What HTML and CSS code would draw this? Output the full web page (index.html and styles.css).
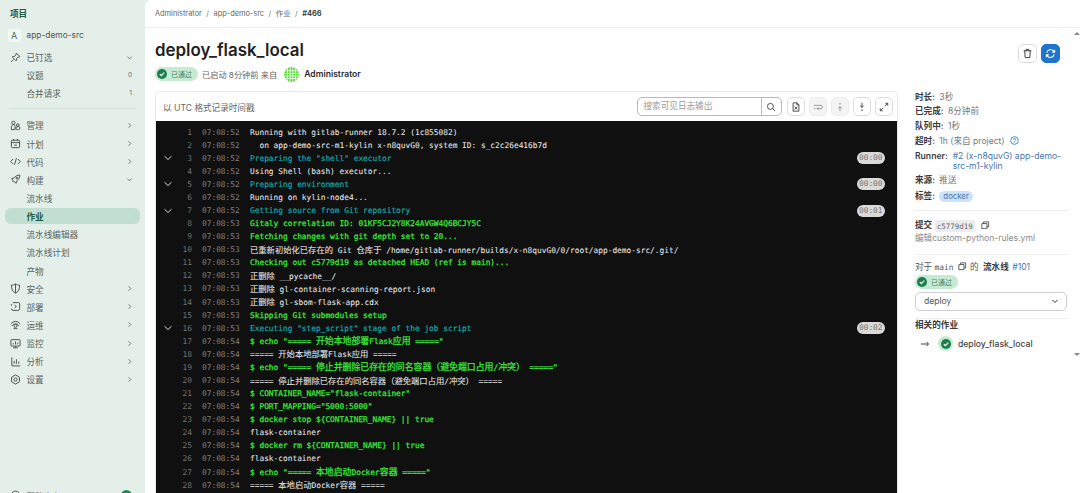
FILE: index.html
```
<!DOCTYPE html>
<html lang="zh">
<head>
<meta charset="utf-8">
<title>deploy_flask_local</title>
<link rel="stylesheet" href="styles.css">
</head>
<body>
<div class="page">
<nav class="side">
  <div class="side-title">项目</div>
  <div class="proj"><span class="proj-a">A</span><span>app-demo-src</span></div>
  <div class="item"><svg class="ico" viewBox="0 0 12 12"><path d="M7 1.2l3.8 3.8-1 .6-.9-.3-1.8 2 .2 1.6-.8.7-4.1-4.1.7-.8 1.6.2 2-1.8-.3-.9zM3.8 8.2L1.2 10.8"/></svg><span class="lbl">已钉选</span><svg class="chev" viewBox="0 0 8 8"><path d="M1.5 3l2.5 2.5L6.500 3"/></svg></div>
  <div class="item"><span class="lbl sub">议题</span><span class="cnt">0</span></div>
  <div class="item"><span class="lbl sub">合并请求</span><span class="cnt">1</span></div>
  <hr class="side-div">
  <div class="item"><svg class="ico" viewBox="0 0 12 12"><circle cx="3.700" cy="3" r="1.800"/><path d="M1.500 10.500V7.200c0-1.200 1-2 2.200-2s1.800.6 1.800 1.800v3.500z"/><circle cx="8.500" cy="5.500" r="1.400"/><rect x="6.500" y="7.200" width="4.300" height="3.300" rx="1.500"/></svg><span class="lbl">管理</span><svg class="chev" viewBox="0 0 8 8"><path d="M3 1.500L5.500 4 3 6.500"/></svg></div>
  <div class="item"><svg class="ico" viewBox="0 0 12 12"><rect x="1.500" y="2.500" width="9" height="8" rx="1"/><path d="M1.500 5h9M3.800 1v2M8.200 1v2M4.500 7.800h3"/></svg><span class="lbl">计划</span><svg class="chev" viewBox="0 0 8 8"><path d="M3 1.500L5.500 4 3 6.500"/></svg></div>
  <div class="item"><svg class="ico" viewBox="0 0 12 12"><path d="M3.500 3.200L.8 6l2.700 2.800M8.500 3.200L11.200 6 8.500 8.800M7 2.500L5 9.500"/></svg><span class="lbl">代码</span><svg class="chev" viewBox="0 0 8 8"><path d="M3 1.500L5.500 4 3 6.500"/></svg></div>
  <div class="item"><svg class="ico" viewBox="0 0 12 12"><path d="M10.800 1.200c-2.700 0-4.800 1-6.300 3l-2.900 1 1.800 1.600-.4 1 1 1 1-.4 1.600 1.800 1-2.900c2-1.500 3.200-3.400 3.200-6.100z"/><circle cx="7.600" cy="4.400" r="1"/></svg><span class="lbl">构建</span><svg class="chev" viewBox="0 0 8 8"><path d="M1.500 3l2.500 2.500L6.500 3"/></svg></div>
  <div class="item"><span class="lbl sub">流水线</span></div>
  <div class="item active"><span class="lbl sub">作业</span></div>
  <div class="item"><span class="lbl sub">流水线编辑器</span></div>
  <div class="item"><span class="lbl sub">流水线计划</span></div>
  <div class="item"><span class="lbl sub">产物</span></div>
  <div class="item"><svg class="ico" viewBox="0 0 12 12"><path d="M6 1c1.500 1 3 1.300 4.500 1.300 0 4-1.200 7.300-4.500 8.700-3.300-1.400-4.500-4.700-4.500-8.700C3 2.300 4.500 2 6 1zM6 1v10"/></svg><span class="lbl">安全</span><svg class="chev" viewBox="0 0 8 8"><path d="M3 1.500L5.500 4 3 6.500"/></svg></div>
  <div class="item"><svg class="ico" viewBox="0 0 12 12"><path d="M3 1.800h6.500a1 1 0 0 1 1 1v5.500a2 2 0 0 1-2 2H3.500a2 2 0 0 1-2-2M1.500 5V3.300"/><path d="M5 4.500L7 6 5 7.500"/></svg><span class="lbl">部署</span><svg class="chev" viewBox="0 0 8 8"><path d="M3 1.500L5.500 4 3 6.500"/></svg></div>
  <div class="item"><svg class="ico" viewBox="0 0 12 12"><path d="M2.200 7.500a4.300 4.300 0 0 1 7.600 0M1 5.300a6 6 0 0 1 10 0"/><circle cx="6" cy="7.500" r="1.700"/><path d="M4 10.500h4"/></svg><span class="lbl">运维</span><svg class="chev" viewBox="0 0 8 8"><path d="M3 1.500L5.500 4 3 6.500"/></svg></div>
  <div class="item"><svg class="ico" viewBox="0 0 12 12"><rect x="1" y="1.800" width="10" height="7" rx=".8"/><path d="M6 9v1.500M3.500 10.700h5M3.500 7V5.500M6 7V3.800M8.500 7V5"/></svg><span class="lbl">监控</span><svg class="chev" viewBox="0 0 8 8"><path d="M3 1.500L5.500 4 3 6.500"/></svg></div>
  <div class="item"><svg class="ico" viewBox="0 0 12 12"><path d="M2 1.500v9.300h9M4.500 8.500V5.500M7 8.500V3.500M9.500 8.500V6"/></svg><span class="lbl">分析</span><svg class="chev" viewBox="0 0 8 8"><path d="M3 1.500L5.500 4 3 6.500"/></svg></div>
  <div class="item"><svg class="ico" viewBox="0 0 12 12"><path d="M6 1l4.300 2.500v5L6 11 1.700 8.500v-5z"/><circle cx="6" cy="6" r="1.800"/></svg><span class="lbl">设置</span><svg class="chev" viewBox="0 0 8 8"><path d="M3 1.500L5.500 4 3 6.500"/></svg></div>
  <div class="item help"><svg class="ico" viewBox="0 0 12 12"><circle cx="6" cy="6" r="4.800"/></svg><span class="lbl">帮助中心</span><span class="help-dot"></span></div>
</nav>

<main class="main">
  <header class="crumbs">
    <span>Administrator</span><i>/</i><span>app-demo-src</span><i>/</i><span>作业</span><i>/</i><b>#466</b>
  </header>
  <div class="content">
    <section class="left">
      <h1 class="title">deploy_flask_local</h1>
      <div class="meta">
        <span class="badge"><svg class="ok" viewBox="0 0 10 10"><circle cx="5" cy="5" r="5"/><path d="M2.800 5.100l1.600 1.600 2.900-3"/></svg>已通过</span>
        <span class="meta-t">已启动 8分钟前 来自</span>
        <svg class="avatar" viewBox="0 0 15 15"><circle cx="7.500" cy="7.500" r="7.500"/><path d="M0 3.750h15M0 6.500h15M0 9h15M0 11.500h15M3.500 0v15M6.200 0v15M8.800 0v15M11.500 0v15"/></svg>
        <b class="meta-n">Administrator</b>
      </div>
      <div class="panel">
        <div class="toolbar">
          <span class="tool-l">以 UTC 格式记录时间戳</span>
          <div class="search"><span class="search-in">搜索可见日志输出</span><span class="search-btn"><svg viewBox="0 0 12 12"><circle cx="5.300" cy="5.300" r="3.600"/><path d="M8 8l2.800 2.800"/></svg></span></div>
          <span class="tbtn"><svg viewBox="0 0 12 12"><path d="M2.500 1h4.700l2.300 2.400V11h-7zM7 1v2.500h2.500M4.200 9l3.500-3.500M4.200 5.500L7.700 9"/></svg></span>
          <span class="tbtn off"><svg viewBox="0 0 12 12"><path d="M1 4h9c1.500 0 1.500 4 0 4H5M1 8h2M6.500 6.300L4.800 8l1.700 1.700"/></svg></span>
          <span class="tbtn off"><svg viewBox="0 0 12 12"><circle class="dot" cx="6" cy="2" r=".9"/><path d="M6 11V5.500M3.800 7.700L6 5.500l2.200 2.200"/></svg></span>
          <span class="tbtn"><svg viewBox="0 0 12 12"><path d="M6 1v5.500M3.800 4.300L6 6.500l2.200-2.200"/><circle class="dot" cx="6" cy="10" r=".9"/></svg></span>
          <span class="tbtn"><svg viewBox="0 0 12 12"><path d="M7 5l3.300-3.300M7.500 1.500h3v3M5 7l-3.300 3.300M4.500 10.500h-3v-3"/></svg></span>
        </div>
        <div class="log">
          <div class="row"><span class="fold"></span><span class="n">1</span><span class="t">07:08:52</span><span class="m">Running with gitlab-runner 18.7.2 (1c855082)</span></div>
          <div class="row"><span class="fold"></span><span class="n">2</span><span class="t">07:08:52</span><span class="m">  on app-demo-src-m1-kylin x-n8quvG0, system ID: s_c2c26e416b7d</span></div>
          <div class="row"><span class="fold"><svg viewBox="0 0 8 8"><path d="M.5 2.200L4 5.500l3.500-3.300"/></svg></span><span class="n">3</span><span class="t">07:08:52</span><span class="m cy">Preparing the "shell" executor</span><span class="pill">00:00</span></div>
          <div class="row"><span class="fold"></span><span class="n">4</span><span class="t">07:08:52</span><span class="m">Using Shell (bash) executor...</span></div>
          <div class="row"><span class="fold"><svg viewBox="0 0 8 8"><path d="M.5 2.200L4 5.500l3.500-3.300"/></svg></span><span class="n">5</span><span class="t">07:08:52</span><span class="m cy">Preparing environment</span><span class="pill">00:00</span></div>
          <div class="row"><span class="fold"></span><span class="n">6</span><span class="t">07:08:52</span><span class="m">Running on kylin-node4...</span></div>
          <div class="row"><span class="fold"><svg viewBox="0 0 8 8"><path d="M.5 2.200L4 5.500l3.500-3.300"/></svg></span><span class="n">7</span><span class="t">07:08:52</span><span class="m cy">Getting source from Git repository</span><span class="pill">00:01</span></div>
          <div class="row"><span class="fold"></span><span class="n">8</span><span class="t">07:08:53</span><span class="m gr">Gitaly correlation ID: 01KF5CJ2Y8K24AVGW4Q6BCJY5C</span></div>
          <div class="row"><span class="fold"></span><span class="n">9</span><span class="t">07:08:53</span><span class="m gr">Fetching changes with git depth set to 20...</span></div>
          <div class="row"><span class="fold"></span><span class="n">10</span><span class="t">07:08:53</span><span class="m"><span class="c">已重新初始化已存在的</span> Git <span class="c">仓库于</span> /home/gitlab-runner/builds/x-n8quvG0/0/root/app-demo-src/.git/</span></div>
          <div class="row"><span class="fold"></span><span class="n">11</span><span class="t">07:08:53</span><span class="m gr">Checking out c5779d19 as detached HEAD (ref is main)...</span></div>
          <div class="row"><span class="fold"></span><span class="n">12</span><span class="t">07:08:53</span><span class="m"><span class="c">正删除</span> __pycache__/</span></div>
          <div class="row"><span class="fold"></span><span class="n">13</span><span class="t">07:08:53</span><span class="m"><span class="c">正删除</span> gl-container-scanning-report.json</span></div>
          <div class="row"><span class="fold"></span><span class="n">14</span><span class="t">07:08:53</span><span class="m"><span class="c">正删除</span> gl-sbom-flask-app.cdx</span></div>
          <div class="row"><span class="fold"></span><span class="n">15</span><span class="t">07:08:53</span><span class="m gr">Skipping Git submodules setup</span></div>
          <div class="row"><span class="fold"><svg viewBox="0 0 8 8"><path d="M.5 2.200L4 5.500l3.500-3.300"/></svg></span><span class="n">16</span><span class="t">07:08:53</span><span class="m cy">Executing "step_script" stage of the job script</span><span class="pill">00:02</span></div>
          <div class="row"><span class="fold"></span><span class="n">17</span><span class="t">07:08:54</span><span class="m gr">$ echo "===== <span class="c">开始本地部署</span>Flask<span class="c">应用</span> ====="</span></div>
          <div class="row"><span class="fold"></span><span class="n">18</span><span class="t">07:08:54</span><span class="m">===== <span class="c">开始本地部署</span>Flask<span class="c">应用</span> =====</span></div>
          <div class="row"><span class="fold"></span><span class="n">19</span><span class="t">07:08:54</span><span class="m gr">$ echo "===== <span class="c">停止并删除已存在的同名容器（避免端口占用</span>/<span class="c">冲突）</span> ====="</span></div>
          <div class="row"><span class="fold"></span><span class="n">20</span><span class="t">07:08:54</span><span class="m">===== <span class="c">停止并删除已存在的同名容器（避免端口占用</span>/<span class="c">冲突）</span> =====</span></div>
          <div class="row"><span class="fold"></span><span class="n">21</span><span class="t">07:08:54</span><span class="m gr">$ CONTAINER_NAME="flask-container"</span></div>
          <div class="row"><span class="fold"></span><span class="n">22</span><span class="t">07:08:54</span><span class="m gr">$ PORT_MAPPING="5000:5000"</span></div>
          <div class="row"><span class="fold"></span><span class="n">23</span><span class="t">07:08:54</span><span class="m gr">$ docker stop ${CONTAINER_NAME} || true</span></div>
          <div class="row"><span class="fold"></span><span class="n">24</span><span class="t">07:08:54</span><span class="m">flask-container</span></div>
          <div class="row"><span class="fold"></span><span class="n">25</span><span class="t">07:08:54</span><span class="m gr">$ docker rm ${CONTAINER_NAME} || true</span></div>
          <div class="row"><span class="fold"></span><span class="n">26</span><span class="t">07:08:54</span><span class="m">flask-container</span></div>
          <div class="row"><span class="fold"></span><span class="n">27</span><span class="t">07:08:54</span><span class="m gr">$ echo "===== <span class="c">本地启动</span>Docker<span class="c">容器</span> ====="</span></div>
          <div class="row"><span class="fold"></span><span class="n">28</span><span class="t">07:08:54</span><span class="m">===== <span class="c">本地启动</span>Docker<span class="c">容器</span> =====</span></div>
        </div>
      </div>
    </section>

    <aside class="aside">
      <div class="actions">
        <span class="abtn"><svg viewBox="0 0 12 12"><path d="M1.800 3h8.400M4.500 3V1.500h3V3M3 3l.4 7.500h5.200L9 3"/></svg></span>
        <span class="abtn blue"><svg viewBox="0 0 12 12"><path d="M2 5a4.200 4.200 0 0 1 7.300-1.800L10.500 4.500M10.500 1.800v2.700H7.800M10 7a4.200 4.200 0 0 1-7.300 1.800L1.500 7.500M1.500 10.200V7.500h2.700"/></svg></span>
      </div>
      <div class="kv"><b>时长:</b> 3秒</div>
      <div class="kv"><b>已完成:</b> 8分钟前</div>
      <div class="kv"><b>队列中:</b> 1秒</div>
      <div class="kv"><b>超时:</b> 1h (来自 project) <svg class="q" viewBox="0 0 10 10"><circle cx="5" cy="5" r="4.300"/><path d="M3.700 4a1.300 1.300 0 1 1 1.900 1.100c-.4.300-.6.500-.6 1M5 7.200v.6"/></svg></div>
      <div class="kv runner"><b>Runner:</b><a>#2 (x-n8quvG) app-demo-src-m1-kylin</a></div>
      <div class="kv"><b>来源:</b> 推送</div>
      <div class="kv tags"><b>标签:</b> <span class="tag">docker</span></div>
      <hr class="a-div">
      <div class="kv commit"><b class="plain">提交</b> <code class="sha">c5779d19</code> <svg class="copy" viewBox="0 0 10 10"><path d="M3 3V1h6v6H7M1 3h6v6H1z"/></svg></div>
      <div class="kv msg">编辑custom-python-rules.yml</div>
      <hr class="a-div pipe-div">
      <div class="kv pipe">对于 <code class="mono">main</code> <svg class="copy" viewBox="0 0 10 10"><path d="M3 3V1h6v6H7M1 3h6v6H1z"/></svg> <span class="de">的</span> <b>流水线</b> <a>#101</a></div>
      <span class="badge small"><svg class="ok" viewBox="0 0 10 10"><circle cx="5" cy="5" r="5"/><path d="M2.800 5.100l1.600 1.600 2.900-3"/></svg>已通过</span>
      <div class="select"><span>deploy</span><svg viewBox="0 0 8 8"><path d="M1.500 3l2.500 2.500L6.500 3"/></svg></div>
      <hr class="a-div">
      <div class="kv rel"><b>相关的作业</b></div>
      <div class="job"><svg class="arrow" viewBox="0 0 10 10"><path d="M1 5h7.500M6.500 3l2 2-2 2"/></svg><span class="ring"><svg class="ok" viewBox="0 0 10 10"><circle cx="5" cy="5" r="5"/><path d="M2.800 5.100l1.600 1.600 2.900-3"/></svg></span><span>deploy_flask_local</span></div>
    </aside>
  </div>
  <span class="mark m1"></span>
  <span class="mark m2"></span>
</main>
</div>
</body>
</html>
```
FILE: styles.css
```
* { box-sizing: border-box; }
html, body { margin: 0; height: 493px; overflow: hidden; background: #e4efe9; }
body, .page { font-family: Inter, "Noto Sans CJK SC", sans-serif; font-size: 8.6px; color: #444; }
.page { display: flex; width: 1080px; height: 493px; overflow: hidden; }

.side { width: 145px; flex: none; height: 493px; overflow: hidden; display: flex; flex-direction: column; padding: 6px 5px 0; background: #e4efe9; color: #5b6560; }
.side-title { font-weight: 700; font-size: 8.6px; color: #1f5a45; padding: 1px 5px 0; height: 20px; }
.proj { display: flex; align-items: center; gap: 6px; height: 18px; margin: 0 0 4px 2.500px; font-size: 8.400px; color: #555; }
.proj-a { width: 13px; height: 13px; background: #f1f7f4; color: #44685a; text-align: center; line-height: 13px; font-size: 9px; border-radius: 2px; }
.item { display: flex; align-items: center; height: 18.150px; flex: none; padding: 0 7px 0 4.500px; border-radius: 6px; }
.ico { width: 11px; height: 11px; flex: none; fill: none; stroke: #444c48; stroke-width: 1; margin-right: 6px; }
.lbl { flex: 1; white-space: nowrap; }
.lbl.sub { padding-left: 17px; }
.chev { width: 7px; height: 7px; flex: none; fill: none; stroke: #666; stroke-width: 1; }
.cnt { font-size: 6.500px; color: #666; padding-right: 1px; }
.side-div { width: 126px; margin: 6px 0 7px 5px; border: 0; border-top: 1px solid #d5e2db; }
.active { background: #c1dfd0; color: #1f5a45; font-weight: 600; height: 16.500px; margin: .8px 0; }
.help { margin-top: auto; margin-bottom: -12px; }
.help-dot { width: 11px; height: 11px; border-radius: 50%; background: #1f8a55; margin-right: 1px; }

.main { flex: 1; position: relative; min-width: 0; height: 493px; background: #fff; border-radius: 6px 0 0 0; display: flex; flex-direction: column; overflow: hidden; }
.crumbs { height: 28px; flex: none; border-bottom: 1px solid #eee; display: flex; align-items: center; gap: 4px; padding-left: 10px; font-size: 7.400px; line-height: 10px; color: #666; }
.crumbs > * { height: 10px; }
.crumbs i { font-style: normal; color: #777; margin: 0 .5px; }
.crumbs b { color: #444; font-weight: 700; }
.content { flex: 1; display: flex; min-height: 0; }

.left { width: 753px; flex: none; padding-left: 10px; display: flex; flex-direction: column; min-height: 0; }
.title { margin: 11px 0 0; height: 25px; font-size: 16.900px; line-height: 23px; font-weight: 600; color: #1f1f22; }
.meta { display: flex; align-items: center; height: 16px; margin: 2px 0 0; }
.badge { display: inline-flex; align-items: center; gap: 4px; width: 43px; height: 14px; padding: 0 0 0 2px; border-radius: 7px; background: #c6e9d2; color: #4c8a68; font-size: 7px; }
.ok { width: 10px; height: 10px; flex: none; fill: #1b7f4d; stroke: none; }
.ok path { fill: none; stroke: #fff; stroke-width: 1.200; }
.meta-t { margin-left: 4px; color: #666; font-size: 8.200px; }
.avatar { width: 15px; height: 15px; margin: 0 5px 0 7px; fill: #63db42; }
.avatar path { stroke: #fff; stroke-width: .7; }
.meta-n { font-weight: 600; color: #2c2c30; }

.panel { margin-top: 9px; flex: 1; min-height: 0; border: 1px solid #e8e8e8; border-bottom: 0; border-radius: 5px 5px 0 0; display: flex; flex-direction: column; overflow: hidden; }
.toolbar { height: 29px; flex: none; display: flex; align-items: center; gap: 4px; padding: 0 4px 0 7px; color: #666; }
.tool-l { flex: 1; }
.search { width: 145px; height: 19.500px; border: 1px solid #b8b8bc; border-radius: 5px; display: flex; margin-right: 1.500px; }
.search-in { flex: 1; padding-left: 6px; line-height: 17.500px; color: #9a9a9e; border-right: 1px solid #bbb; }
.search-btn { width: 19px; display: flex; align-items: center; justify-content: center; }
.search svg, .tbtn svg { width: 10px; height: 10px; fill: none; stroke: #333; stroke-width: 1; }
.tbtn .dot { fill: #333; stroke: none; }
.tbtn { width: 18px; height: 19px; border: 1px solid #dcdcde; border-radius: 5px; display: flex; align-items: center; justify-content: center; }
.tbtn.off { background: #f4f4f5; border-color: #ececee; }
.tbtn.off svg { stroke: #888; }
.tbtn.off .dot { fill: #888; }

.log { flex: 1; background: #101010; padding-top: 4.500px; overflow: hidden; font-family: "DejaVu Sans Mono", "Noto Sans CJK SC", monospace; font-size: 7.840px; color: #e6e6e6; }
.row { display: flex; align-items: center; height: 13.080px; white-space: pre; padding-right: 12px; }
.fold { width: 18px; flex: none; padding-left: 8px; display: flex; }
.fold svg { width: 8px; height: 8px; fill: none; stroke: #d8d8d8; stroke-width: 1; }
.n { width: 18px; flex: none; text-align: right; color: #737373; }
.t { width: 48px; flex: none; margin-left: 10px; color: #808080; }
.m { flex: 1; min-width: 0; -webkit-text-stroke: .06px; }
.c { font-family: "Noto Sans CJK SC", sans-serif; font-size: 8.300px; line-height: 1; }
.gr .c { font-size: 8.900px; }
.cy { color: #12a4a6; -webkit-text-stroke: .2px; }
.gr { color: #3ae83c; -webkit-text-stroke: .25px; }
.pill { flex: none; width: 28.500px; height: 12px; border-radius: 6px; background: #d9d9d9; color: #777; text-align: center; line-height: 12px; font-size: 7.800px; }

.aside { width: 153px; flex: none; margin-left: 17px; display: flex; flex-direction: column; align-items: stretch; }
.actions { display: flex; justify-content: flex-end; gap: 4px; height: 19px; margin-top: 15.500px; margin-bottom: 27px; padding-right: 8px; }
.abtn { width: 19px; height: 19px; border: 1px solid #dcdcde; border-radius: 5px; display: flex; align-items: center; justify-content: center; }
.abtn svg { width: 11px; height: 11px; fill: none; stroke: #333; stroke-width: 1; }
.abtn.blue { background: #1f75cb; border-color: #1f75cb; }
.abtn.blue svg { stroke: #fff; stroke-width: 1.200; }
.kv { min-height: 14.700px; line-height: 14.700px; color: #777; white-space: nowrap; }
.kv b { color: #3a3a3e; font-weight: 600; margin-right: 2px; }
.kv b.plain { margin-right: 0; }
.kv a, .pipe a { color: #4a75ac; }
.q { width: 9px; height: 9px; fill: none; stroke: #1f75cb; stroke-width: .9; vertical-align: -1.500px; margin-left: 3px; }
.runner { display: flex; gap: 3px; white-space: normal; line-height: 10px; padding: 2.500px 0 2px; }
.runner b { flex: none; line-height: 10px; }
.tags { margin-top: 1px; }
.tag { display: inline-block; height: 11px; line-height: 11px; padding: 0 4px; border-radius: 6px; background: #cbe2f9; color: #4a75ac; font-size: 7.800px; }
.a-div { width: 100%; margin: 7px 0 7px; border: 0; border-top: 1px solid #eee; }
.pipe-div { margin: 8px 0 5px; }
.commit { height: 14px; }
.sha { background: #ececef; border-radius: 2px; padding: 1.500px 2px; font-family: "DejaVu Sans Mono", monospace; font-size: 7.500px; color: #666; margin: 0 2px 0 0; }
.copy { width: 8.500px; height: 8.500px; fill: none; stroke: #333; stroke-width: .9; vertical-align: -1px; margin-left: 2px; }
.msg { color: #8a8a8a; margin-top: -2px; }
.pipe { color: #555; }
.pipe b { margin: 0 1px 0 2px; }
.de { margin-left: 1px; }
.mono { font-family: "DejaVu Sans Mono", monospace; font-size: 7.900px; }
.badge.small { align-self: flex-start; margin-top: 0; }
.select { margin-top: 2.500px; height: 19px; width: 152px; border: 1px solid #cfcfd3; border-radius: 5px; display: flex; align-items: center; justify-content: space-between; padding: 0 7px 0 8px; color: #555; font-size: 8.600px; }
.select svg { width: 8px; height: 8px; fill: none; stroke: #333; stroke-width: 1; }
.rel { margin-top: -8px; }
.job { display: flex; align-items: center; height: 20px; margin-top: 1px; padding-left: 5px; color: #444; font-weight: 500; }
.arrow { width: 10px; height: 10px; fill: none; stroke: #444; stroke-width: 1; margin-right: 8px; }
.ring { width: 15px; height: 15px; border-radius: 50%; background: #c6e9d2; display: flex; align-items: center; justify-content: center; margin-right: 5px; }
.mark { position: absolute; right: 0; width: 0; height: 0; border-left: 3px solid transparent; border-right: 3px solid transparent; }
.m1 { top: 32px; border-bottom: 3px solid #888; }
.m2 { top: 353px; border-top: 3px solid #888; }
```
